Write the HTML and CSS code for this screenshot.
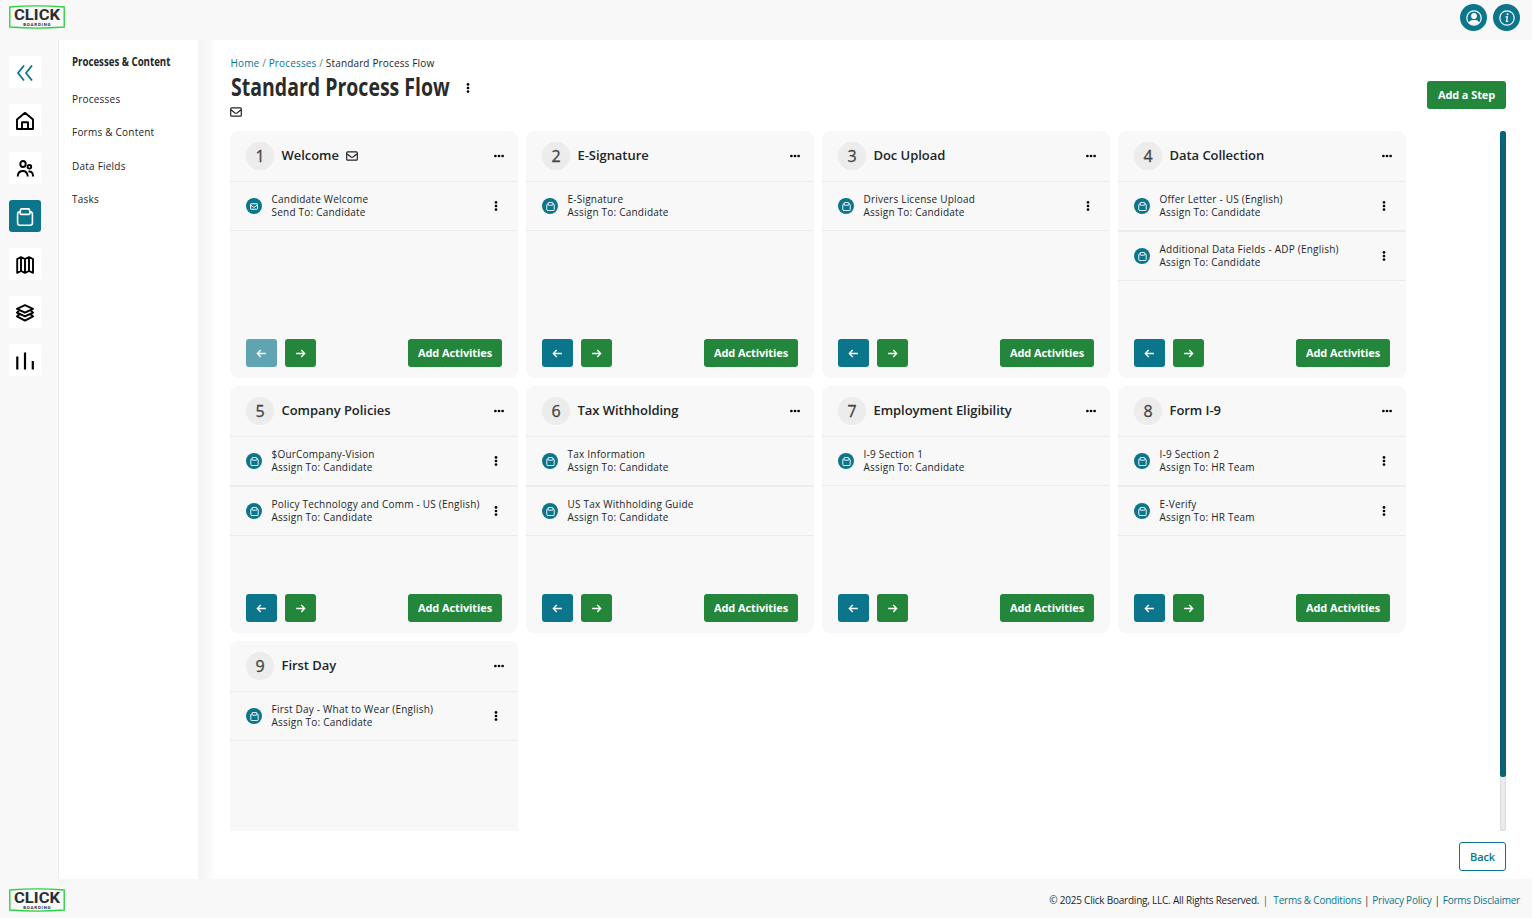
FILE: index.html
```
<!DOCTYPE html>
<html lang="en">

<head>
    <meta charset="UTF-8">
    <title>Standard Process Flow</title>
    <link rel="stylesheet" href="styles.css">
</head>

<body>

    <!-- shared icons -->
    <svg class="sprite">
        <symbol id="logo" viewBox="0 0 56 24" overflow="visible">
            <path d="M.8 2Q28 -.2 55.2 2V22Q28 24.2 .8 22Z" fill="#fafafa" stroke="#2bd143" stroke-width="1.4" />
            <text x="5" y="15.4" font-size="15" font-weight="700" textLength="46" lengthAdjust="spacingAndGlyphs">CLICK</text>
            <text x="14.2" y="20.9" font-size="4.4" font-weight="700" textLength="27.4" lengthAdjust="spacing">BOARDING</text>
        </symbol>
        <symbol id="mail" viewBox="0 0 12 10">
            <path d="M1.6 .9H10.4Q11.3 .9 11.3 1.8V8.2Q11.3 9.1 10.4 9.1H1.6Q.7 9.1 .7 8.2V1.8Q.7 .9 1.6 .9M.9 2.8L5 5.9Q6 6.6 7 5.9L11.1 2.8" />
        </symbol>
        <symbol id="bag" viewBox="0 0 18 18">
            <path d="M4.2 3.6Q1.6 3.8 1.6 6V15Q1.6 17.2 3.8 17.2H14.2Q16.4 17.2 16.4 15V6Q16.4 3.8 13.8 3.6M5.4 .9H12.6Q13.4 .9 13.5 1.7L13.9 5Q13.9 6.4 12.7 6.4H5.3Q4.1 6.4 4.1 5L4.5 1.7Q4.6 .9 5.4 .9Z" />
        </symbol>
        <symbol id="dots" viewBox="0 0 12 4">
            <circle cx="2.4" cy="2" r="1.35" />
            <circle cx="6" cy="2" r="1.35" />
            <circle cx="9.6" cy="2" r="1.35" />
        </symbol>
        <symbol id="arrow" viewBox="0 0 12 10">
            <path d="M1.2 5H10.4M6.8 1.2L10.6 5L6.8 8.8" />
        </symbol>
    </svg>

    <header>
        <svg class="logo"><use href="#logo" /></svg>
        <div class="account">
            <a class="round"><svg viewBox="0 0 16 16">
                    <circle cx="8" cy="8" r="7.2" />
                    <circle class="solid" cx="8" cy="6" r="2.9" />
                    <path class="solid" d="M2.8 12.6Q4 10 6.2 10H9.8Q12 10 13.2 12.6Q11 15 8 15Q5 15 2.8 12.6Z" />
                </svg></a>
            <a class="round"><svg viewBox="0 0 16 16">
                    <circle cx="8" cy="8" r="7.2" />
                    <path d="M6.6 6.8H8.4L7.5 11.4H9.2" />
                    <circle class="solid" cx="8.5" cy="4.3" r="1" />
                </svg></a>
        </div>
    </header>

    <div class="page">
        <nav class="rail">
            <a class="back-arrows"><svg viewBox="0 0 18 18"><path d="M8 1.5L2 9L8 16.5M16 1.5L10 9L16 16.5" /></svg></a>
            <a><svg viewBox="0 0 18 18"><path d="M1 7.4L9 .8L17 7.4V17H1ZM6 17V10.2H12V17" /></svg></a>
            <a><svg viewBox="0 0 18 18">
                    <ellipse cx="7" cy="4" rx="2.7" ry="3" />
                    <circle cx="13.4" cy="6.8" r="1.8" />
                    <path d="M1.8 16.6V15.4Q2.4 11 7 11Q10.8 11 11.6 15.4V16.6M12.4 11.6Q16.6 11 17 15.6V16.6" />
                </svg></a>
            <a class="active"><svg><use href="#bag" /></svg></a>
            <a><svg viewBox="0 0 18 18"><path d="M1.2 3L5 1.2L9 3L13 1.2L17 3V16.8L13 15L9 16.8L5 15L1.2 16.8ZM5 1.5V15M9 3V16.8M13 1.5V15" /></svg></a>
            <a><svg viewBox="0 0 18 18"><path d="M9 1.2L17 4.8L9 8.6L1 4.8ZM3.4 6.2L1 8.6L9 12.4L17 8.6L14.6 6.2M3.4 10L1 12.4L9 16.6L17 12.4L14.6 10" /></svg></a>
            <a><svg class="bars" viewBox="0 0 18 18"><path d="M1.3 4.6V17.6M9 .6V17.6M16.8 9V17.6" /></svg></a>
        </nav>

        <aside>
            <h2><span class="narrow">Processes &amp; Content</span></h2>
            <a>Processes</a>
            <a>Forms &amp; Content</a>
            <a>Data Fields</a>
            <a>Tasks</a>
        </aside>

        <main>
            <div class="top">
                <div>
                    <p class="crumbs"><a>Home</a> <i>/</i> <a>Processes</a> <i>/</i> Standard Process Flow</p>
                    <div class="title">
                        <h1><span class="narrow">Standard Process Flow</span></h1>
                        <svg class="dots vertical"><use href="#dots" /></svg>
                    </div>
                    <svg class="mail"><use href="#mail" /></svg>
                </div>
                <button class="green add-step">Add a Step</button>
            </div>

            <div class="scroller">
                <section id="steps"></section>
                <div class="track">
                    <div class="thumb"></div>
                </div>
            </div>

            <button class="back">Back</button>
        </main>
    </div>

    <footer>
        <svg class="logo"><use href="#logo" /></svg>
        <p><span>© 2025 Click Boarding, LLC. All Rights Reserved.</span> <b class="first">|</b> <a>Terms &amp; Conditions</a> <b>|</b> <a>Privacy Policy</a> <b>|</b> <a>Forms Disclaimer</a></p>
    </footer>

    <template id="step">
        <article>
            <div class="step-head">
                <span class="number"></span>
                <h3></h3>
                <svg class="mail"><use href="#mail" /></svg>
                <svg class="dots"><use href="#dots" /></svg>
            </div>
            <div class="activities"></div>
            <div class="step-foot">
                <button class="move left"><svg><use href="#arrow" /></svg></button>
                <button class="move green"><svg><use href="#arrow" /></svg></button>
                <button class="green add">Add Activities</button>
            </div>
        </article>
    </template>

    <template id="activity">
        <div class="activity">
            <span class="badge"><svg><use href="#bag" /></svg></span>
            <p><span class="name"></span><br><span class="who"></span></p>
            <svg class="dots vertical"><use href="#dots" /></svg>
        </div>
    </template>

    <script>
        // menu: false hides the three dots on an activity
        const steps = [
            { title: "Welcome", mail: true, activities: [{ name: "Candidate Welcome", who: "Send To: Candidate", mail: true }] },
            { title: "E-Signature", activities: [{ name: "E-Signature", menu: false }] },
            { title: "Doc Upload", activities: [{ name: "Drivers License Upload" }] },
            { title: "Data Collection", activities: [{ name: "Offer Letter - US (English)" }, { name: "Additional Data Fields - ADP (English)" }] },
            { title: "Company Policies", activities: [{ name: "$OurCompany-Vision" }, { name: "Policy Technology and Comm - US (English)" }] },
            { title: "Tax Withholding", activities: [{ name: "Tax Information", menu: false }, { name: "US Tax Withholding Guide", menu: false }] },
            { title: "Employment Eligibility", activities: [{ name: "I-9 Section 1", menu: false }] },
            { title: "Form I-9", activities: [{ name: "I-9 Section 2", who: "Assign To: HR Team" }, { name: "E-Verify", who: "Assign To: HR Team" }] },
            { title: "First Day", activities: [{ name: "First Day - What to Wear (English)" }] }
        ];

        const list = document.querySelector("#steps");

        steps.forEach((step, index) => {
            const card = document.querySelector("#step").content.cloneNode(true);
            card.querySelector(".number").textContent = index + 1;
            card.querySelector("h3").textContent = step.title;
            card.querySelector(".left").disabled = index == 0;
            if (!step.mail) {
                card.querySelector(".mail").remove();
            }

            step.activities.forEach(activity => {
                const row = document.querySelector("#activity").content.cloneNode(true);
                row.querySelector(".name").textContent = activity.name;
                row.querySelector(".who").textContent = activity.who || "Assign To: Candidate";
                if (activity.mail) {
                    row.querySelector(".badge").classList.add("letter");
                    row.querySelector(".badge use").setAttribute("href", "#mail");
                }
                if (activity.menu === false) {
                    row.querySelector(".dots").remove();
                }
                card.querySelector(".activities").appendChild(row);
            });

            list.appendChild(card);
        });
    </script>
</body>

</html>
```
FILE: styles.css
```
* {
    box-sizing: border-box;
}

body {
    margin: 0;
    height: 100vh;
    display: flex;
    flex-direction: column;
    overflow: hidden;
    background-color: #f8f8f8;
    color: #212529;
    font-family: "Open Sans", sans-serif;
    font-size: 10px;
    letter-spacing: 0.22px;
}

h1,
h2,
h3,
p {
    margin: 0;
}

svg {
    display: block;
    flex: none;
    fill: none;
    stroke: currentColor;
}

.sprite {
    position: absolute;
    width: 0;
    height: 0;
}

a {
    color: #0b758b;
}

button {
    border: 0;
    border-radius: 3px;
    padding: 0;
    height: 28px;
    color: white;
    font-family: inherit;
    font-size: 11px;
    font-weight: 700;
    line-height: 26px;
    letter-spacing: -0.1px;
}

.green {
    background-color: #23863b;
}

header {
    height: 40px;
    flex: none;
    display: flex;
    justify-content: space-between;
    padding: 4px 12px 0 9px;
}

.logo {
    width: 56px;
    height: 24px;
    margin-top: 1px;
    overflow: visible;
}

#logo text {
    fill: #2b2d30;
    stroke: none;
    font-family: Roboto, sans-serif;
    letter-spacing: 0;
}

.account {
    display: flex;
    gap: 6px;
}

.round {
    width: 27px;
    height: 27px;
    border-radius: 50%;
    background-color: #0b758b;
    color: white;
    display: grid;
    place-items: center;
}

.round svg {
    width: 16px;
    height: 16px;
    stroke-width: 1.2;
}

.round .solid {
    fill: currentColor;
    stroke: none;
}

.page {
    flex: 1;
    min-height: 0;
    display: flex;
    background-color: white;
}

.rail {
    width: 59px;
    padding: 16px 0 0 9px;
    background-color: #f8f8f8;
    border-right: 1px solid #ececec;
    display: flex;
    flex-direction: column;
    gap: 16px;
}

.rail a {
    width: 32px;
    height: 32px;
    border-radius: 3px;
    background-color: white;
    color: black;
    display: grid;
    place-items: center;
}

.rail svg {
    width: 18px;
    height: 18px;
    margin-top: 1px;
    stroke-width: 1.9;
    stroke-linejoin: round;
}

.rail .bars {
    stroke-width: 2.2;
}

.rail .back-arrows {
    color: #0b758b;
}

.rail .active {
    background-color: #0b758b;
    color: white;
}

.rail .active svg {
    stroke-width: 1.6;
}

aside {
    width: 139px;
    padding: 13px 0 0 13px;
}

aside a {
    display: block;
    color: #212529;
    line-height: 14px;
    margin-bottom: 19.4px;
}

.narrow {
    display: inline-block;
    transform-origin: left center;
    white-space: nowrap;
    letter-spacing: 0;
}

h2 {
    font-size: 12px;
    line-height: 18px;
    margin-bottom: 21px;
}

h2 .narrow {
    transform: scaleX(0.805);
}

main {
    flex: 1;
    min-width: 0;
    padding: 16px 26px 0 32px;
    display: flex;
    flex-direction: column;
    background: linear-gradient(to right, #f5f5f5, #f6f6f6 8px, white 18px);
}

.top {
    height: 75px;
    display: flex;
    justify-content: space-between;
}

.crumbs {
    line-height: 15px;
    padding-left: 0.5px;
    letter-spacing: 0.15px;
}

.crumbs i {
    font-style: normal;
    color: #6c757d;
}

.title {
    display: flex;
    align-items: center;
    height: 33px;
}

h1 {
    width: 232px;
    font-size: 25px;
    line-height: 34px;
    margin-top: -3px;
    padding-left: 0.5px;
    color: #2b2b2b;
}

h1 .narrow {
    transform: scaleX(0.78);
}

.mail {
    width: 12px;
    height: 10px;
    stroke-width: 1.2;
}

.top .mail {
    margin-top: 3px;
}

.dots {
    width: 12px;
    height: 4px;
    fill: black;
    stroke: none;
}

.vertical {
    transform: rotate(90deg);
}

.add-step {
    width: 79px;
    margin-top: 25px;
}

.scroller {
    height: 700px;
    display: flex;
    justify-content: space-between;
    overflow: hidden;
}

#steps {
    display: grid;
    grid-template-columns: repeat(4, 288px);
    grid-auto-rows: 247.2px;
    gap: 8px;
}

article {
    display: flex;
    flex-direction: column;
    background-color: #f8f8f8;
    border-radius: 8px;
}

.step-head {
    height: 50px;
    flex: none;
    display: flex;
    align-items: center;
    padding: 0 13px 0 16px;
}

.number {
    width: 28px;
    height: 28px;
    border-radius: 50%;
    background-color: #ececec;
    color: #444;
    font-size: 16px;
    letter-spacing: 0;
    line-height: 28px;
    text-align: center;
    -webkit-text-stroke: 0.3px #444;
}

h3 {
    margin: 0 7px 2px 7.5px;
    font-size: 13px;
    font-weight: 600;
    letter-spacing: -0.05px;
}

.step-head .dots {
    margin-left: auto;
}

.activities {
    flex: 1;
}

.activity {
    height: 50px;
    display: flex;
    align-items: center;
    padding: 0 16px;
    border-top: 1px solid #ececec;
    border-bottom: 1px solid #ececec;
}

.activity p {
    margin-left: 9.5px;
    line-height: 13px;
    white-space: nowrap;
}

.activity .dots {
    margin-left: auto;
}

.badge {
    width: 16px;
    height: 16px;
    border-radius: 50%;
    background-color: #0b758b;
    color: white;
    display: grid;
    place-items: center;
}

.badge svg {
    width: 9px;
    height: 9px;
    stroke-width: 1.9;
}

.badge.letter svg {
    width: 8px;
    height: 7px;
    stroke-width: 1.5;
}

.step-foot {
    display: flex;
    gap: 8px;
    padding: 0 16px 11px;
}

.move {
    width: 31px;
    display: grid;
    place-items: center;
}

.move svg {
    width: 11px;
    height: 9px;
    stroke-width: 1.5;
}

.left {
    background-color: #0b758b;
}

.left svg {
    transform: scaleX(-1);
}

.left:disabled {
    background-color: #60a3b1;
}

.add {
    width: 94px;
    margin-left: auto;
}

.track {
    width: 6px;
    background-color: #ebebeb;
    border-radius: 3px;
    box-shadow: inset 0 0 2px #bbb;
}

.thumb {
    height: 646px;
    border-radius: 3px;
    background-color: #0a6679;
    box-shadow: inset 0 0 2px #07505f;
}

.back {
    width: 47px;
    height: 29px;
    margin: 11px 0 0 auto;
    border: 1px solid #0b758b;
    background-color: white;
    color: #0b758b;
    font-weight: 600;
}

footer {
    height: 39px;
    flex: none;
    display: flex;
    justify-content: space-between;
    align-items: center;
    padding: 0 12px 0 9px;
}

footer .logo {
    margin-top: 3px;
}

footer p {
    letter-spacing: -0.22px;
    padding-top: 3px;
}

footer b {
    font-weight: 400;
    margin: 0 0.5px;
}

footer .first {
    color: #a33;
    margin: 0 3px 0 1px;
}
```
